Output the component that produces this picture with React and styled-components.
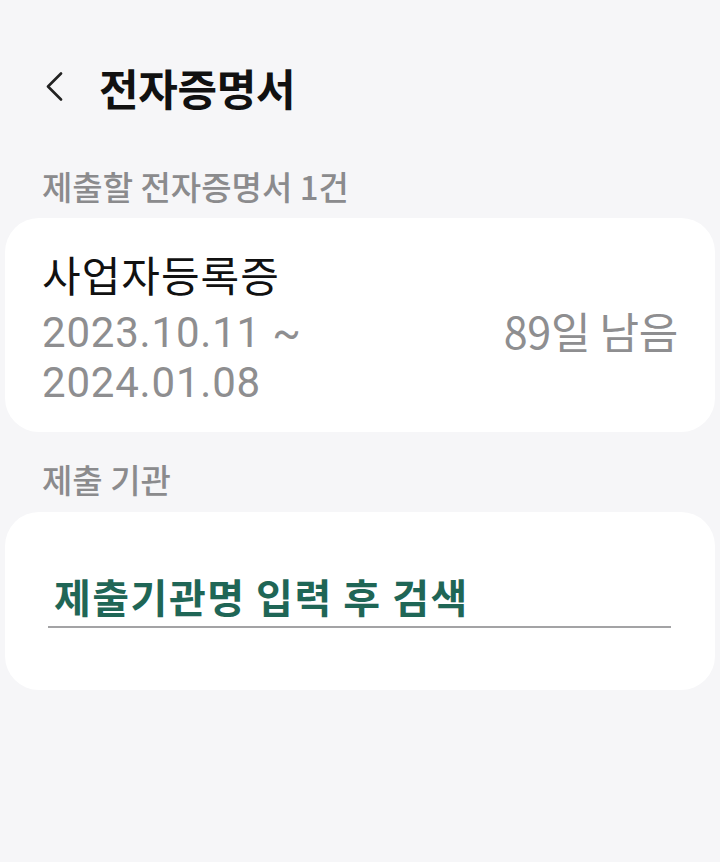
import React from 'react';
import styled, { createGlobalStyle } from 'styled-components';

const GlobalStyle = createGlobalStyle`
  html, body {
    margin: 0;
    padding: 0;
    background: #f6f6f8;
    font-family: "Noto Sans CJK KR", "Noto Sans", sans-serif;
  }
`;

const Page = styled.div`
  width: 720px;
  height: 862px;
  background: #f6f6f8;
  overflow: hidden;
`;

const Header = styled.header`
  display: flex;
  align-items: center;
  height: 60px;
  padding: 57px 0 0 45px;
  gap: 34px;
`;

const BackButton = styled.button`
  border: 0;
  background: none;
  padding: 0;
  width: 20px;
  height: 30px;
  display: flex;
  align-items: center;
  cursor: pointer;
`;

const Title = styled.h1`
  margin: 0;
  font-size: 43px;
  line-height: 60px;
  font-weight: 700;
  color: #111;
  letter-spacing: -0.3px;
`;

const SectionLabel = styled.div`
  padding: ${p => p.$top || 0}px 0 0 42px;
  font-size: 33px;
  font-weight: 500;
  color: #8b8b8d;
  line-height: 40px;
`;

const Card = styled.section`
  margin: ${p => p.$top || 12}px 5px 0;
  background: #fff;
  border-radius: 34px;
  padding: ${p => p.$pad};
  height: ${p => p.$h}px;
  box-sizing: border-box;
`;

const DocName = styled.div`
  font-size: 42px;
  color: #111;
  line-height: 52px;
  letter-spacing: 1px;
`;

const DateRow = styled.div`
  display: flex;
  justify-content: space-between;
  align-items: flex-start;
  color: #8e8e90;
  font-size: 43px;
  line-height: 50px;
  margin-top: 5px;
`;

const Dates = styled.div`
  display: flex;
  flex-direction: column;
  padding-top: 3px;
`;

const DateLine = styled.div`
  height: 50px;
  font-family: Roboto, "Noto Sans", sans-serif;
  font-size: 42px;
  letter-spacing: 0.8px;
`;

const Remain = styled.div`
  letter-spacing: -0.3px;
`;

const SearchField = styled.div`
  border-bottom: 2px solid #a3a3a5;
  padding: 0 0 6px 6px;
`;

const SearchText = styled.div`
  font-size: 40px;
  font-weight: 700;
  color: #1f6656;
  line-height: 48px;
  letter-spacing: 1.5px;
`;

export default function App() {
  return (
    <Page>
      <GlobalStyle />
      <Header>
        <BackButton aria-label="뒤로">
          <svg width="20" height="30" viewBox="0 0 20 30">
            <path d="M16 1.5 L3 14.5 L16 27.5" fill="none" stroke="#222" strokeWidth="2.6" strokeLinecap="round" strokeLinejoin="round" />
          </svg>
        </BackButton>
        <Title>전자증명서</Title>
      </Header>
      <SectionLabel $top={49}>제출할 전자증명서 1건</SectionLabel>
      <Card $top={12} $h={214} $pad="30px 37px 0">
        <DocName>사업자등록증</DocName>
        <DateRow>
          <Dates>
            <DateLine>2023.10.11 ~</DateLine>
            <DateLine>2024.01.08</DateLine>
          </Dates>
          <Remain>89일 남음</Remain>
        </DateRow>
      </Card>
      <SectionLabel $top={27}>제출 기관</SectionLabel>
      <Card $top={13} $h={178} $pad="60px 44px 0 43px">
        <SearchField>
          <SearchText>제출기관명 입력 후 검색</SearchText>
        </SearchField>
      </Card>
    </Page>
  );
}
